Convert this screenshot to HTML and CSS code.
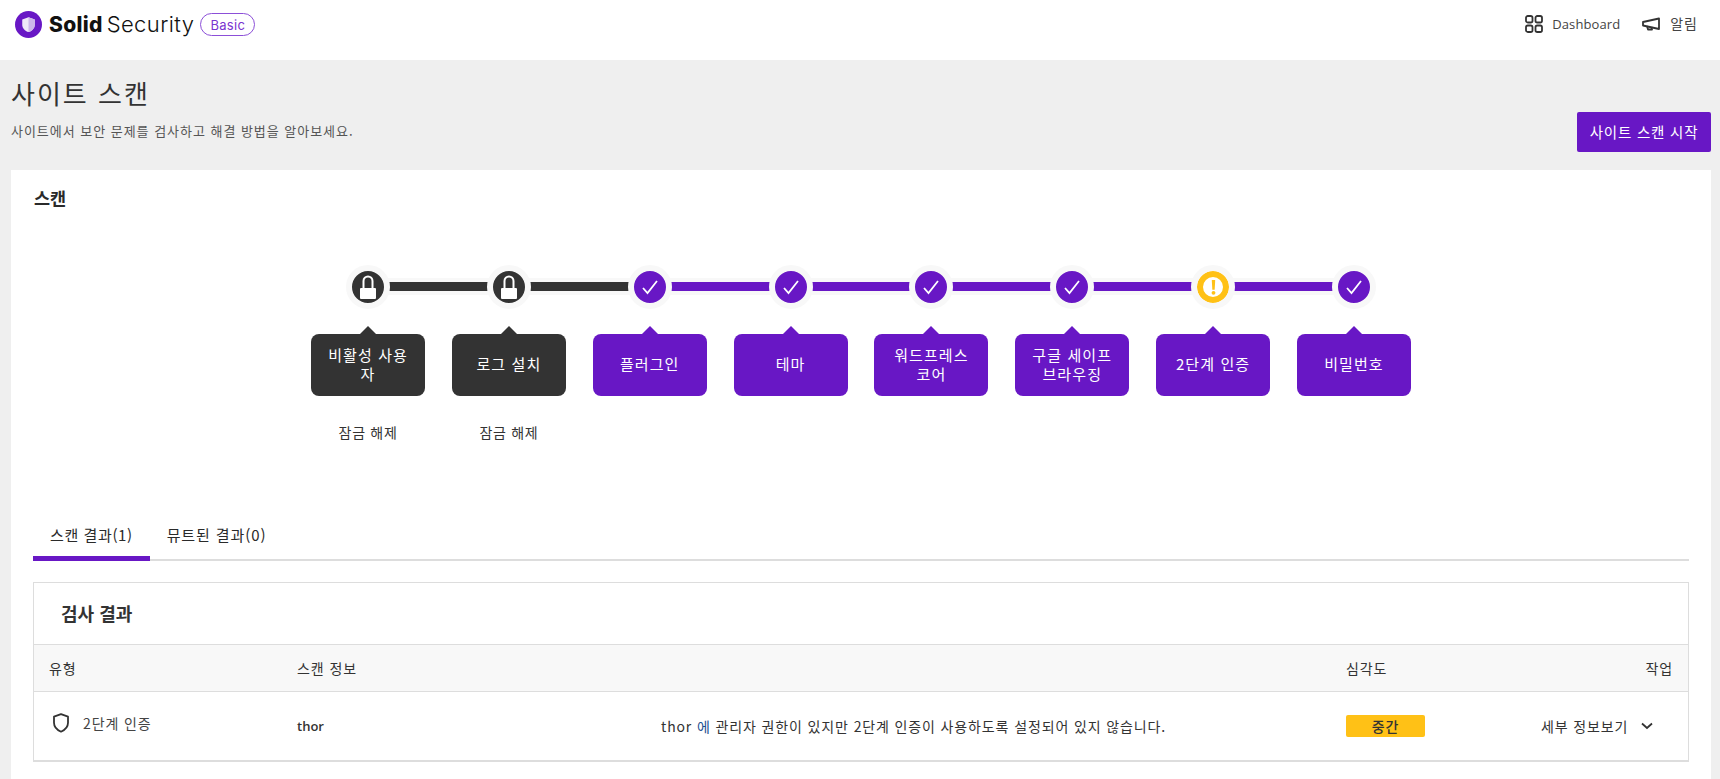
FILE: index.html
```html
<!DOCTYPE html>
<html lang="ko">
<head>
<meta charset="utf-8">
<title>사이트 스캔</title>
<link rel="stylesheet" href="styles.css">
</head>
<body>
<header class="topbar">
  <div class="brand">
    <svg class="brand-mark" viewBox="0 0 28 28" width="28" height="28"><circle cx="14" cy="14" r="14" fill="#6817c5"/><path d="M14 6.500l6.500 2.200v5.200c0 4-2.800 6.700-6.500 8-3.700-1.300-6.500-4-6.500-8V8.700z" fill="#efe6f8"/><path d="M14 6.500l6.500 2.200v5.200c0 4-2.800 6.700-6.500 8z" fill="#cdb5ea"/></svg>
    <span class="brand-name"><b>Solid</b><span class="brand-light">Security</span></span>
    <span class="brand-tier">Basic</span>
  </div>
  <nav class="topnav">
    <a class="topnav-item"><svg viewBox="0 0 18 18" width="18" height="18" fill="none" stroke="#333" stroke-width="1.800"><rect x="1" y="1" width="6.500" height="6.500" rx="1.800"/><rect x="10.500" y="1" width="6.500" height="6.500" rx="1.800"/><rect x="1" y="10.500" width="6.500" height="6.500" rx="1.800"/><rect x="10.500" y="10.500" width="6.500" height="6.500" rx="1.800"/></svg>Dashboard</a>
    <a class="topnav-item topnav-ko"><svg viewBox="0 0 18 14" width="18" height="14" fill="none" stroke="#333" stroke-width="1.800" stroke-linejoin="round"><path d="M1 5l16-3.500v10.500L1 8.500z"/><path d="M5 9l1 3.500 4 0-.5-2.500"/></svg>알림</a>
  </nav>
</header>

<section class="page-head">
  <div>
    <h1 class="page-title">사이트 스캔</h1>
    <p class="page-sub">사이트에서 보안 문제를 검사하고 해결 방법을 알아보세요.</p>
  </div>
  <button class="primary-btn">사이트 스캔 시작</button>
</section>

<main class="card">
  <h2 class="card-title">스캔</h2>

  <ol class="steps">
    <li class="step step-locked">
      <span class="node"><svg viewBox="0 0 24 24" width="24" height="24"><path d="M7.500 13V6a4.500 4.500 0 0 1 9 0v7" fill="none" stroke="#fff" stroke-width="2"/><rect x="4" y="13" width="16" height="11" rx="1" fill="#fff"/></svg></span>
      <span class="bubble">비활성 사용자</span>
      <span class="unlock">잠금 해제</span>
    </li>
    <li class="step step-locked">
      <span class="node"><svg viewBox="0 0 24 24" width="24" height="24"><path d="M7.500 13V6a4.500 4.500 0 0 1 9 0v7" fill="none" stroke="#fff" stroke-width="2"/><rect x="4" y="13" width="16" height="11" rx="1" fill="#fff"/></svg></span>
      <span class="bubble">로그 설치</span>
      <span class="unlock">잠금 해제</span>
    </li>
    <li class="step">
      <span class="node"><svg class="check" viewBox="0 0 16 16" width="16" height="16"><path d="M1 9l4.500 5L15 2" fill="none" stroke="#fff" stroke-width="1.800"/></svg></span>
      <span class="bubble">플러그인</span>
    </li>
    <li class="step">
      <span class="node"><svg class="check" viewBox="0 0 16 16" width="16" height="16"><path d="M1 9l4.500 5L15 2" fill="none" stroke="#fff" stroke-width="1.800"/></svg></span>
      <span class="bubble">테마</span>
    </li>
    <li class="step">
      <span class="node"><svg class="check" viewBox="0 0 16 16" width="16" height="16"><path d="M1 9l4.500 5L15 2" fill="none" stroke="#fff" stroke-width="1.800"/></svg></span>
      <span class="bubble">워드프레스 코어</span>
    </li>
    <li class="step">
      <span class="node"><svg class="check" viewBox="0 0 16 16" width="16" height="16"><path d="M1 9l4.500 5L15 2" fill="none" stroke="#fff" stroke-width="1.800"/></svg></span>
      <span class="bubble">구글 세이프 브라우징</span>
    </li>
    <li class="step step-warn">
      <span class="node"><svg viewBox="0 0 4 14" width="5" height="15"><path d="M.4 0h3.200l-.5 9H.9z" fill="#ffc116"/><circle cx="2" cy="12" r="1.800" fill="#ffc116"/></svg></span>
      <span class="bubble">2단계 인증</span>
    </li>
    <li class="step">
      <span class="node"><svg class="check" viewBox="0 0 16 16" width="16" height="16"><path d="M1 9l4.500 5L15 2" fill="none" stroke="#fff" stroke-width="1.800"/></svg></span>
      <span class="bubble">비밀번호</span>
    </li>
  </ol>

  <div class="tabs">
    <a class="tab tab-active">스캔 결과(1)</a>
    <a class="tab">뮤트된 결과(0)</a>
  </div>

  <section class="panel">
    <h3 class="panel-title">검사 결과</h3>
    <div class="table-row table-head">
      <span>유형</span>
      <span>스캔 정보</span>
      <span></span>
      <span>심각도</span>
      <span class="cell-end">작업</span>
    </div>
    <div class="table-row table-body">
      <span class="type-cell"><svg viewBox="0 0 18 20" width="18" height="20" fill="none" stroke="#333" stroke-width="1.800" stroke-linejoin="round"><path d="M9 1.200l7 2.500v6c0 4.300-3 7.200-7 9-4-1.800-7-4.700-7-9v-6z"/></svg>2단계 인증</span>
      <span class="user-cell">thor</span>
      <span class="desc-cell">thor <i>에</i> 관리자 권한이 있지만 2단계 인증이 사용하도록 설정되어 있지 않습니다.</span>
      <span><span class="badge">중간</span></span>
      <span class="action-cell">세부 정보보기<svg viewBox="0 0 12 8" width="12" height="8" fill="none" stroke="#333" stroke-width="1.800"><path d="M1 1.500l5 4.500 5-4.500"/></svg></span>
    </div>
  </section>
</main>
</body>
</html>
```
FILE: styles.css
```css
* { box-sizing: border-box; }
html, body { margin: 0; height: 100%; overflow: hidden; }
body {
  background: #efefef;
  color: #333;
  font-family: "Noto Sans CJK KR", "Open Sans", sans-serif;
  font-size: 14px;
  line-height: 20px;
}
.topbar {
  height: 60px;
  background: #fff;
  display: flex;
  justify-content: space-between;
  align-items: flex-start;
  padding: 11px 22px 0 15px;
}
.brand { display: flex; align-items: center; height: 27px; }
.brand-mark { display: block; width: 27px; height: 27px; }
.brand-name {
  margin-left: 7px;
  font-family: Inter, sans-serif;
  font-size: 21px;
  color: #111;
  display: flex;
  align-items: baseline;
  gap: 4px;
}
.brand-name b { font-weight: 800; letter-spacing: .3px; }
.brand-light { font-size: 22px; font-weight: 300; letter-spacing: .4px; }
.brand-tier {
  margin-left: 6px;
  border: 1px solid #8c4fd8;
  border-radius: 12px;
  height: 23px;
  width: 55px;
  display: flex;
  align-items: center;
  justify-content: center;
  font-family: Inter, sans-serif;
  font-size: 13px;
  letter-spacing: .3px;
  color: #7a33d0;
}
.topnav { display: flex; gap: 22px; padding-top: 4px; }
.topnav-item {
  display: flex;
  align-items: center;
  gap: 9px;
  height: 18px;
  font-family: "Open Sans", "Noto Sans CJK KR", sans-serif;
  font-size: 13px;
  letter-spacing: .1px;
  color: #444;
}
.topnav-ko { gap: 10px; font-size: 14px; letter-spacing: 1px; }
.page-head {
  height: 110px;
  display: flex;
  justify-content: space-between;
  padding: 15px 9px 0 11px;
}
.page-title {
  margin: 0;
  font-size: 26px;
  line-height: 36px;
  letter-spacing: 2px;
  font-weight: 400;
  color: #333;
}
.page-sub {
  margin: 10px 0 0;
  font-size: 13px;
  line-height: 20px;
  letter-spacing: .97px;
  color: #555;
}
.primary-btn {
  align-self: flex-start;
  margin-top: 37px;
  width: 134px;
  height: 40px;
  border: 0;
  border-radius: 2px;
  background: #6817c5;
  color: #fff;
  font: 400 14.5px/20px "Noto Sans CJK KR", sans-serif;
  letter-spacing: .8px;
}
.card {
  margin: 0 9px 0 11px;
  height: 620px;
  background: #fff;
  padding: 17px 22px 0;
}
.card-title {
  margin: 0;
  padding-left: 1px;
  font-size: 17.5px;
  line-height: 22px;
  font-weight: 700;
  color: #2a2a2a;
}
.steps {
  list-style: none;
  margin: 66px 0 0;
  padding: 0;
  display: flex;
  justify-content: center;
  height: 244px;
}
.step {
  position: relative;
  width: 140.85px;
  display: flex;
  flex-direction: column;
  align-items: center;
  --tone: #6817c5;
}
.step-locked { --tone: #333; }
.step:not(:last-child)::after {
  content: "";
  position: absolute;
  left: 70px;
  width: 141px;
  top: 3px;
  height: 17px;
  background: linear-gradient(#f8f8f8 0 4px, var(--tone) 4px 13px, #f8f8f8 13px);
}
.step-warn::after { background: linear-gradient(#f8f8f8 0 4px, #6817c5 4px 13px, #f8f8f8 13px) !important; }
.node {
  position: relative;
  z-index: 1;
  margin-top: -10px;
  width: 44px;
  height: 44px;
  border-radius: 50%;
  background: var(--tone);
  border: 6px solid #f8f8f8;
  display: flex;
  align-items: center;
  justify-content: center;
  overflow: hidden;
}
.step-warn .node { background: #fff; box-shadow: inset 0 0 0 6px #ffc116; }
.bubble {
  position: relative;
  margin-top: 25px;
  width: 114px;
  height: 62px;
  padding: 0 14px 3px;
  border-radius: 8px;
  background: var(--tone);
  color: #fff;
  font-size: 15px;
  letter-spacing: 1.1px;
  line-height: 19px;
  text-align: center;
  display: flex;
  align-items: center;
  justify-content: center;
  line-break: anywhere;
}
.bubble::before {
  content: "";
  position: absolute;
  top: -8px;
  left: 50%;
  margin-left: -8px;
  border: 8px solid transparent;
  border-top: 0;
  border-bottom-color: var(--tone);
}
.step-warn .bubble { background: #6817c5; }
.step-warn .bubble::before { border-bottom-color: #6817c5; }
.unlock {
  margin-top: 26px;
  font-size: 14px;
  letter-spacing: .7px;
  line-height: 20px;
  color: #333;
}
.tabs {
  display: flex;
  height: 42px;
  border-bottom: 2px solid #ddd;
}
.tab {
  height: 42px;
  padding: 0 17px;
  font-size: 15px;
  letter-spacing: .9px;
  line-height: 32px;
  color: #2a2a2a;
}
.tab-active { border-bottom: 5px solid #6817c5; letter-spacing: .6px; }
.panel {
  margin-top: 21px;
  border: 1px solid #ddd;
  border-bottom-width: 2px;
}
.panel-title {
  margin: 0;
  height: 61px;
  padding-left: 27px;
  font-size: 18px;
  line-height: 60px;
  font-weight: 700;
  color: #333;
}
.table-row {
  display: grid;
  grid-template-columns: 248px 364px 685px 195px 1fr;
  align-items: center;
  padding: 0 15px;
  border-top: 1px solid #ddd;
}
.table-head { height: 47px; background: #f8f8f8; font-size: 14px; letter-spacing: .9px; }
.table-body { height: 69px; font-size: 14px; letter-spacing: .87px; }
.cell-end { text-align: right; }
.type-cell { display: flex; align-items: center; gap: 13px; padding-left: 3px; margin-top: -6px; color: #444; }
.user-cell { font-family: "Open Sans", sans-serif; font-weight: 600; font-size: 13px; letter-spacing: 0; color: #333; }
.desc-cell { color: #333; white-space: nowrap; }
.desc-cell i { font-style: normal; color: #1d4f91; }
.badge {
  display: block;
  width: 79px;
  height: 22px;
  margin-top: -1px;
  border-radius: 2px;
  background: #ffc116;
  font-size: 14px;
  font-weight: 500;
  line-height: 22px;
  text-align: center;
  color: #333;
}
.action-cell { display: flex; align-items: center; justify-content: flex-end; gap: 13px; white-space: nowrap; padding-right: 20px; }
```
